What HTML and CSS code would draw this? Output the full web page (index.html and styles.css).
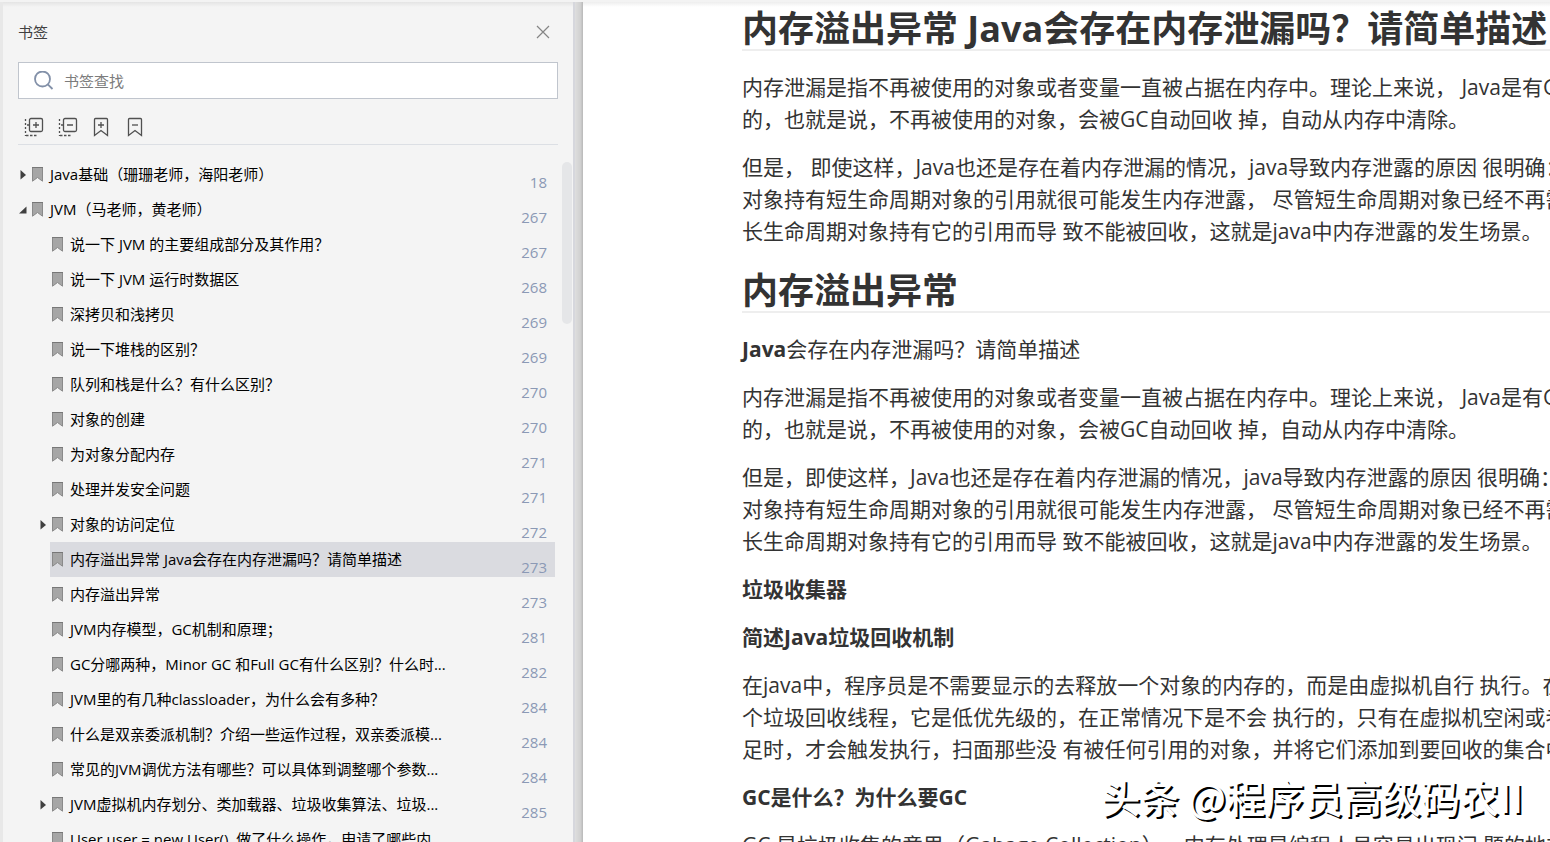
FILE: index.html
```html
<!DOCTYPE html>
<html lang="zh-CN">
<head>
<meta charset="utf-8">
<title>书签</title>
<link rel="stylesheet" href="styles.css">
</head>
<body>
<svg class="defs" aria-hidden="true">
  <symbol id="mark" viewBox="0 0 11 15"><path d="M.5 .5H10.500V14.200L5.500 10.500.5 14.200Z" fill="#a6a6a6" stroke="#8a8a8a"/><path d="M0 .5H11" stroke="#777"/></symbol>
  <symbol id="closed" viewBox="0 0 12 12"><path d="M2.500 1V10.500L8 6Z" fill="#404040"/></symbol>
  <symbol id="open" viewBox="0 0 12 12"><path d="M8.500 2.500V9.500H1Z" fill="#404040"/></symbol>
</svg>
<div class="app">
  <aside class="panel">
    <header class="panel-head">
      <h2 class="panel-title">书签</h2>
      <button class="icon-btn close" type="button" aria-label="关闭"><svg width="14" height="14" viewBox="0 0 14 14"><path d="M1 1L13 13M13 1L1 13" stroke="#858585" stroke-width="1.200"/></svg></button>
    </header>
    <label class="search">
      <svg width="20" height="20" viewBox="0 0 20 20" fill="none" stroke="#8290a8" stroke-width="1.800"><circle cx="8.500" cy="8" r="7.500"/><path d="M13.800 13.300L18.500 18"/></svg>
      <input class="search-input" type="text" placeholder="书签查找" aria-label="书签查找">
    </label>
    <div class="tools">
      <button class="icon-btn" type="button" aria-label="全部展开"><svg width="20" height="20" viewBox="0 0 20 20" fill="none" stroke="#505050" stroke-width="1.300"><rect x="5.500" y="1.500" width="13" height="13" rx="1.500"/><path d="M12 5V11M9 8H15M3 8H5.500"/><path d="M1.500 2V19" stroke-dasharray="2 2"/><path d="M2 18.500H14" stroke-dasharray="2.500 1.500"/></svg></button>
      <button class="icon-btn" type="button" aria-label="全部折叠"><svg width="20" height="20" viewBox="0 0 20 20" fill="none" stroke="#505050" stroke-width="1.300"><rect x="5.500" y="1.500" width="13" height="13" rx="1.500"/><path d="M9 8H15M3 8H5.500"/><path d="M1.500 2V19" stroke-dasharray="2 2"/><path d="M2 18.500H14" stroke-dasharray="2.500 1.500"/></svg></button>
      <button class="icon-btn" type="button" aria-label="添加书签"><svg width="20" height="20" viewBox="0 0 20 20" fill="none" stroke="#505050" stroke-width="1.300"><path d="M2.500 18.500V2.500Q2.500 1.500 3.500 1.500H14.500Q15.500 1.500 15.500 2.500V18.500L9 13.500Z"/><path d="M9 5V11M6 8H12"/></svg></button>
      <button class="icon-btn" type="button" aria-label="删除书签"><svg width="20" height="20" viewBox="0 0 20 20" fill="none" stroke="#505050" stroke-width="1.300"><path d="M2.500 18.500V2.500Q2.500 1.500 3.500 1.500H14.500Q15.500 1.500 15.500 2.500V18.500L9 13.500Z"/><path d="M6 8H12"/></svg></button>
    </div>
    <div class="tree-area">
      <ul class="tree">
        <li><div class="row"><svg class="toggle"><use href="#closed"/></svg><a class="item" href="#"><svg class="mark"><use href="#mark"/></svg><span class="label">Java基础（珊珊老师，海阳老师）</span><span class="page">18</span></a></div></li>
        <li><div class="row"><svg class="toggle"><use href="#open"/></svg><a class="item" href="#"><svg class="mark"><use href="#mark"/></svg><span class="label">JVM（马老师，黄老师）</span><span class="page">267</span></a></div>
          <ul class="branch">
            <li class="row"><a class="item" href="#"><svg class="mark"><use href="#mark"/></svg><span class="label">说一下 JVM 的主要组成部分及其作用？</span><span class="page">267</span></a></li>
            <li class="row"><a class="item" href="#"><svg class="mark"><use href="#mark"/></svg><span class="label">说一下 JVM 运行时数据区</span><span class="page">268</span></a></li>
            <li class="row"><a class="item" href="#"><svg class="mark"><use href="#mark"/></svg><span class="label">深拷贝和浅拷贝</span><span class="page">269</span></a></li>
            <li class="row"><a class="item" href="#"><svg class="mark"><use href="#mark"/></svg><span class="label">说一下堆栈的区别？</span><span class="page">269</span></a></li>
            <li class="row"><a class="item" href="#"><svg class="mark"><use href="#mark"/></svg><span class="label">队列和栈是什么？有什么区别？</span><span class="page">270</span></a></li>
            <li class="row"><a class="item" href="#"><svg class="mark"><use href="#mark"/></svg><span class="label">对象的创建</span><span class="page">270</span></a></li>
            <li class="row"><a class="item" href="#"><svg class="mark"><use href="#mark"/></svg><span class="label">为对象分配内存</span><span class="page">271</span></a></li>
            <li class="row"><a class="item" href="#"><svg class="mark"><use href="#mark"/></svg><span class="label">处理并发安全问题</span><span class="page">271</span></a></li>
            <li class="row"><svg class="toggle"><use href="#closed"/></svg><a class="item" href="#"><svg class="mark"><use href="#mark"/></svg><span class="label">对象的访问定位</span><span class="page">272</span></a></li>
            <li class="row"><a class="item selected" href="#"><svg class="mark"><use href="#mark"/></svg><span class="label">内存溢出异常 Java会存在内存泄漏吗？请简单描述</span><span class="page">273</span></a></li>
            <li class="row"><a class="item" href="#"><svg class="mark"><use href="#mark"/></svg><span class="label">内存溢出异常</span><span class="page">273</span></a></li>
            <li class="row"><a class="item" href="#"><svg class="mark"><use href="#mark"/></svg><span class="label">JVM内存模型，GC机制和原理；</span><span class="page">281</span></a></li>
            <li class="row"><a class="item" href="#"><svg class="mark"><use href="#mark"/></svg><span class="label">GC分哪两种，Minor GC 和Full GC有什么区别？什么时...</span><span class="page">282</span></a></li>
            <li class="row"><a class="item" href="#"><svg class="mark"><use href="#mark"/></svg><span class="label">JVM里的有几种classloader，为什么会有多种？</span><span class="page">284</span></a></li>
            <li class="row"><a class="item" href="#"><svg class="mark"><use href="#mark"/></svg><span class="label">什么是双亲委派机制？介绍一些运作过程，双亲委派模...</span><span class="page">284</span></a></li>
            <li class="row"><a class="item" href="#"><svg class="mark"><use href="#mark"/></svg><span class="label">常见的JVM调优方法有哪些？可以具体到调整哪个参数...</span><span class="page">284</span></a></li>
            <li class="row"><svg class="toggle"><use href="#closed"/></svg><a class="item" href="#"><svg class="mark"><use href="#mark"/></svg><span class="label">JVM虚拟机内存划分、类加载器、垃圾收集算法、垃圾...</span><span class="page">285</span></a></li>
            <li class="row"><a class="item" href="#"><svg class="mark"><use href="#mark"/></svg><span class="label">User user = new User()  做了什么操作，申请了哪些内...</span></a></li>
          </ul>
        </li>
      </ul>
      <div class="scrollbar"><div class="thumb"></div></div>
    </div>
  </aside>
  <div class="divider"></div>
  <main class="doc">
    <h1 class="title">内存溢出异常 Java会存在内存泄漏吗？请简单描述</h1>
    <p>内存泄漏是指不再被使用的对象或者变量一直被占据在内存中。理论上来说， Java是有GC<br>的，也就是说，不再被使用的对象，会被GC自动回收 掉，自动从内存中清除。</p>
    <p>但是， 即使这样，Java也还是存在着内存泄漏的情况，java导致内存泄露的原因 很明确：<br>对象持有短生命周期对象的引用就很可能发生内存泄露， 尽管短生命周期对象已经不再需<br>长生命周期对象持有它的引用而导 致不能被回收，这就是java中内存泄露的发生场景。</p>
    <h1 class="title">内存溢出异常</h1>
    <p><strong>Java</strong>会存在内存泄漏吗？请简单描述</p>
    <p>内存泄漏是指不再被使用的对象或者变量一直被占据在内存中。理论上来说， Java是有GC<br>的，也就是说，不再被使用的对象，会被GC自动回收 掉，自动从内存中清除。</p>
    <p>但是，即使这样，Java也还是存在着内存泄漏的情况，java导致内存泄露的原因 很明确：长<br>对象持有短生命周期对象的引用就很可能发生内存泄露， 尽管短生命周期对象已经不再需<br>长生命周期对象持有它的引用而导 致不能被回收，这就是java中内存泄露的发生场景。</p>
    <p><strong>垃圾收集器</strong></p>
    <p><strong>简述Java垃圾回收机制</strong></p>
    <p>在java中，程序员是不需要显示的去释放一个对象的内存的，而是由虚拟机自行 执行。在j<br>个垃圾回收线程，它是低优先级的，在正常情况下是不会 执行的，只有在虚拟机空闲或者<br>足时，才会触发执行，扫面那些没 有被任何引用的对象，并将它们添加到要回收的集合中</p>
    <p><strong>GC是什么？为什么要GC</strong></p>
    <p>GC 是垃圾收集的意思（Gabage Collection），内存处理是编程人员容易出现问 题的地方，</p>
  </main>
</div>
<div class="watermark">头条 @程序员高级码农II</div>
</body>
</html>
```
FILE: styles.css
```css
* { box-sizing: border-box; }
body {
  margin: 0;
  height: 100vh;
  overflow: hidden;
  background: #fff;
  border-top: 2px solid #f3f3f3;
  font-family: "Open Sans", "Noto Sans CJK SC", sans-serif;
  text-spacing-trim: space-all;
}
ul { list-style: none; margin: 0; padding: 0; }
.defs { position: absolute; width: 0; height: 0; }
.app {
  display: flex;
  height: 100%;
}
.panel {
  display: flex;
  flex-direction: column;
  flex: 0 0 573px;
  min-height: 0;
  padding-left: 15px;
  border-left: 3px solid #e8e8e8;
  background: linear-gradient(#e4e4e4, #f4f4f4 5px);
}
.panel-head {
  display: flex;
  justify-content: space-between;
  align-items: center;
  height: 60px;
  padding-right: 23px;
}
.panel-title { margin: 0; padding-bottom: 2px; font-size: 15px; font-weight: 400; color: #404040; }
.icon-btn { display: block; padding: 0; border: 0; background: none; line-height: 0; }
.search {
  display: flex;
  flex: none;
  align-items: center;
  gap: 10px;
  height: 37px;
  margin-right: 15px;
  padding: 0 15px;
  border: 1px solid #c0c5cd;
  background: #fff;
}
.search-input {
  flex: 1;
  min-width: 0;
  padding: 0;
  border: 0;
  outline: 0;
  background: none;
  font: inherit;
  font-size: 15px;
}
.search-input::placeholder { color: #7c7c7c; }
.tools {
  display: flex;
  flex: none;
  align-items: center;
  gap: 14px;
  height: 46px;
  margin-right: 15px;
  padding: 10px 6px 0;
  border-bottom: 1px solid #dcdfe4;
}
.tree-area { display: flex; flex: 1; min-height: 0; padding-top: 12px; overflow: hidden; }
.tree { flex: 1; min-width: 0; }
.branch { padding-left: 20px; }
.row { display: grid; grid-template-columns: 12px 1fr; align-items: center; height: 35px; }
.toggle { width: 12px; height: 12px; }
.item {
  grid-column: 2;
  display: flex;
  align-items: center;
  height: 35px;
  padding: 0 8px 0 2px;
  color: #000;
  font-size: 15px;
  text-decoration: none;
  white-space: pre;
}
.selected { background: #dadbe0; }
.mark { flex: none; width: 11px; height: 15px; margin-right: 7px; }
.label { flex: 1; padding-bottom: 2px; line-height: 20px; }
.page { padding-top: 15px; color: #8b99b5; line-height: 20px; }
.scrollbar { flex: 0 0 18px; padding: 5px 1px 0 7px; }
.thumb { height: 162px; border-radius: 5px; background: #e5e6e8; }
.divider {
  flex: 0 0 10px;
  border-left: 2px solid #d6d7dd;
  background: linear-gradient(90deg, #dedede, #d0d0d0 70%, #b8b8b8);
}
.doc {
  flex: 1;
  min-width: 0;
  padding: 5px 0 0 159px;
  overflow: hidden;
  background: linear-gradient(#eee, #fff 5px);
  color: #333;
  font-size: 21px;
  line-height: 32px;
  white-space: nowrap;
}
.title {
  margin: 22px 0 20px;
  padding-top: 2px;
  border-bottom: 2px solid #eee;
  font-size: 36px;
  line-height: 40px;
}
.title:first-child { margin-top: 0; }
.doc p { margin: 0 0 16px; }
.watermark {
  position: absolute;
  right: 27px;
  bottom: 22px;
  color: #fff;
  font-family: "Noto Sans CJK SC", sans-serif;
  font-size: 39px;
  font-weight: 500;
  line-height: 48px;
  text-shadow: 2px 2px 0 #000;
  white-space: nowrap;
}
```
